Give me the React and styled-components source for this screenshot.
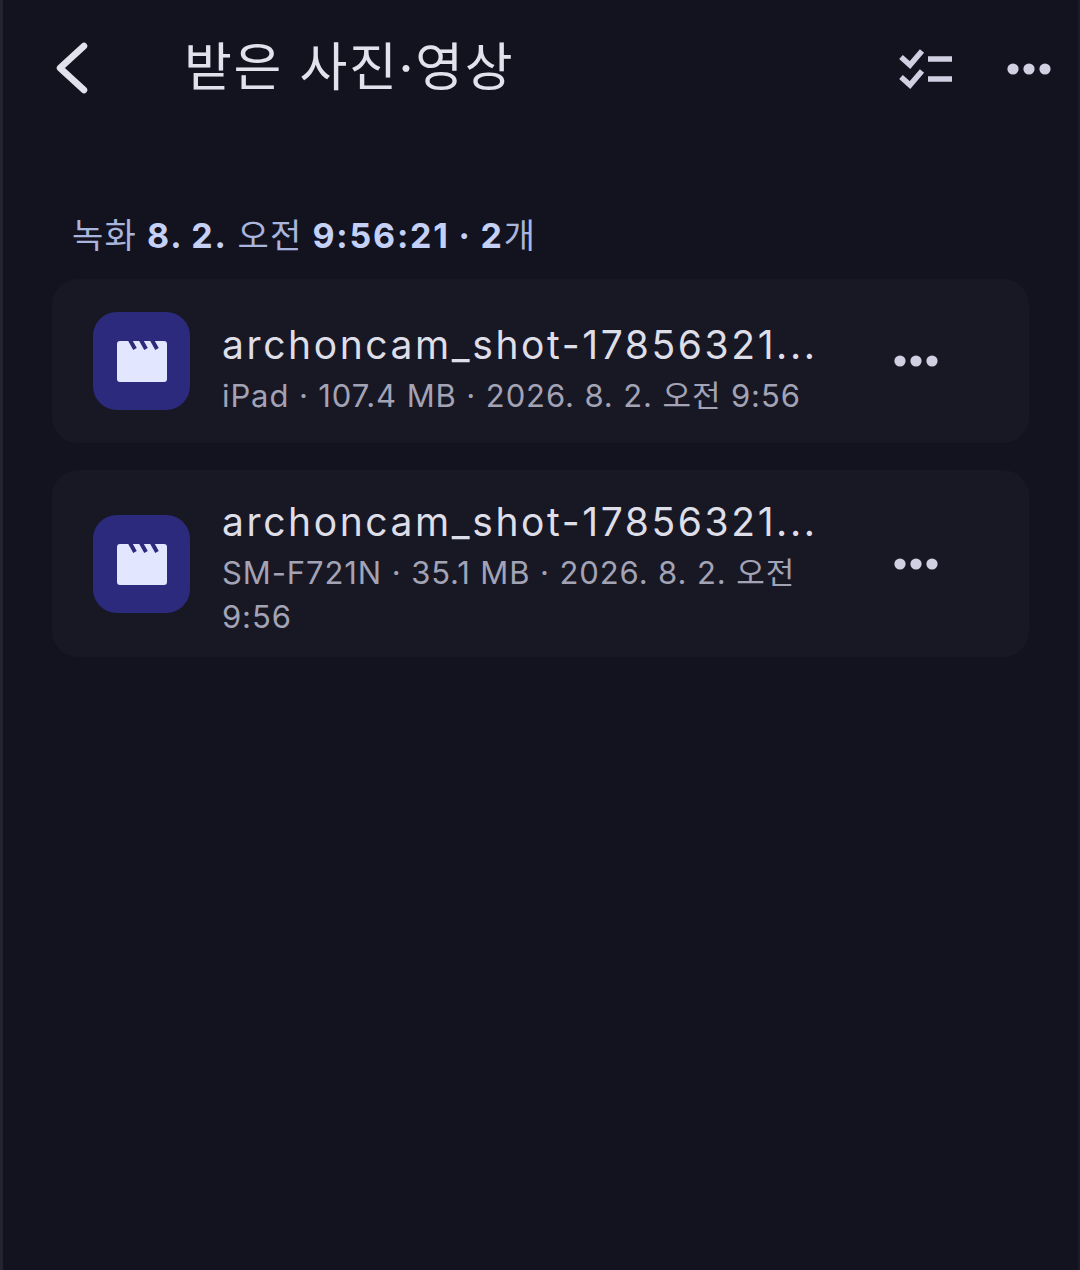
import styled, { createGlobalStyle } from "styled-components";

const GlobalStyle = createGlobalStyle`
    html, body {
        margin: 0;
        height: 100%;
        background: #13131f;
    }
    * {
        box-sizing: border-box;
    }
`;

const FONT = `Inter, "Noto Sans CJK KR", sans-serif`;

const Page = styled.div`
    width: 1080px;
    height: 1270px;
    overflow: hidden;
    background: #13131f;
    border-left: 3px solid #24242f;
    border-right: 2px solid #1c1c28;
    font-family: ${FONT};
`;

const Header = styled.header`
    height: 135px;
    display: flex;
    align-items: center;
    padding: 0 27px 0 47px;
`;

const BackButton = styled.div`
    width: 134px;
    display: flex;
    align-items: center;
    color: #e2e2ec;
`;

const Title = styled.h1`
    flex: 1;
    margin: 0;
    font-size: 52px;
    line-height: 60px;
    font-weight: 400;
    letter-spacing: 1.7px;
    color: #e2e2ec;
`;

const HeaderActions = styled.div`
    display: flex;
    align-items: center;
    gap: 54px;
    color: #d0d0e2;
`;

const HeaderDots = styled.div`
    display: flex;
    margin-top: 3px;
`;

const SectionLabel = styled.div`
    margin: 79px 0 21px 69px;
    font-size: 34px;
    line-height: 44px;
    font-weight: 400;
    letter-spacing: 1.3px;
    word-spacing: -1px;
    color: #a9b5dc;
    white-space: nowrap;
`;

const Strong = styled.strong`
    font-weight: 700;
    letter-spacing: 1.8px;
    color: #c4d0f6;
`;

const List = styled.div`
    display: flex;
    flex-direction: column;
    gap: 27px;
    padding: 0 49px;
`;

const Card = styled.div`
    display: flex;
    align-items: center;
    min-height: 164px;
    padding: 15px 41px;
    border-radius: 26px;
    background: #181825;
`;

const Thumb = styled.div`
    flex: none;
    width: 97px;
    height: 98px;
    margin-right: 32px;
    display: flex;
    align-items: center;
    justify-content: center;
    border-radius: 24px;
    background: #2c2a7c;
`;

const Info = styled.div`
    width: 600px;
    min-height: 120px;
    padding: 12px 0 3px;
    display: flex;
    flex-direction: column;
    justify-content: flex-end;
`;

const FileName = styled.div`
    margin-bottom: 4px;
    font-size: 39px;
    line-height: 50px;
    color: #dedee8;
    letter-spacing: 2.6px;
    white-space: nowrap;
`;

const Meta = styled.div`
    font-size: 31px;
    line-height: 44px;
    color: #a3a3b6;
    letter-spacing: 0.9px;
    word-break: keep-all;
`;

const MoreButton = styled.div`
    flex: none;
    margin-left: 72px;
    display: flex;
    color: #d0d0e2;
`;

function Dots() {
    return (
        <svg width="44" height="14" viewBox="0 0 44 14" fill="currentColor">
            <circle cx="6" cy="7" r="5.6" />
            <circle cx="22" cy="7" r="5.6" />
            <circle cx="38" cy="7" r="5.6" />
        </svg>
    );
}

function Clapper() {
    return (
        <svg width="50" height="42" viewBox="0 0 50 42">
            <path
                d="M3 1h44a3 3 0 0 1 3 3v35a3 3 0 0 1-3 3H3a3 3 0 0 1-3-3V4a3 3 0 0 1 3-3z"
                fill="#e2e6ff"
            />
            <path
                d="M13 0l5 9M24 0l5 9M35 0l5 9"
                stroke="#2c2a7c"
                strokeWidth="4"
                fill="none"
            />
        </svg>
    );
}

const files = [
    { id: 1, meta: "iPad · 107.4 MB · 2026. 8. 2. 오전 9:56" },
    { id: 2, meta: "SM-F721N · 35.1 MB · 2026. 8. 2. 오전 9:56" },
];

export default function App() {
    return (
        <>
            <GlobalStyle />
            <Page>
                <Header>
                    <BackButton>
                        <svg width="40" height="52" viewBox="0 0 40 52" fill="none">
                            <path
                                d="M34 4L10 26l24 22"
                                stroke="currentColor"
                                strokeWidth="6.5"
                                strokeLinecap="round"
                                strokeLinejoin="round"
                            />
                        </svg>
                    </BackButton>
                    <Title>받은 사진·영상</Title>
                    <HeaderActions>
                        <svg width="54" height="44" viewBox="0 0 54 44" fill="none" stroke="currentColor" strokeWidth="5.5">
                            <path d="M2 11l9 8L23 5M2 31l9 8L23 25" />
                            <path d="M29 13h24M29 33h24" />
                        </svg>
                        <HeaderDots>
                            <Dots />
                        </HeaderDots>
                    </HeaderActions>
                </Header>
                <SectionLabel>
                    녹화 <Strong>8. 2.</Strong> 오전 <Strong>9:56:21 · 2</Strong>개
                </SectionLabel>
                <List>
                    {files.map((file) => (
                        <Card key={file.id}>
                            <Thumb>
                                <Clapper />
                            </Thumb>
                            <Info>
                                <FileName>archoncam_shot-17856321...</FileName>
                                <Meta>{file.meta}</Meta>
                            </Info>
                            <MoreButton>
                                <Dots />
                            </MoreButton>
                        </Card>
                    ))}
                </List>
            </Page>
        </>
    );
}
